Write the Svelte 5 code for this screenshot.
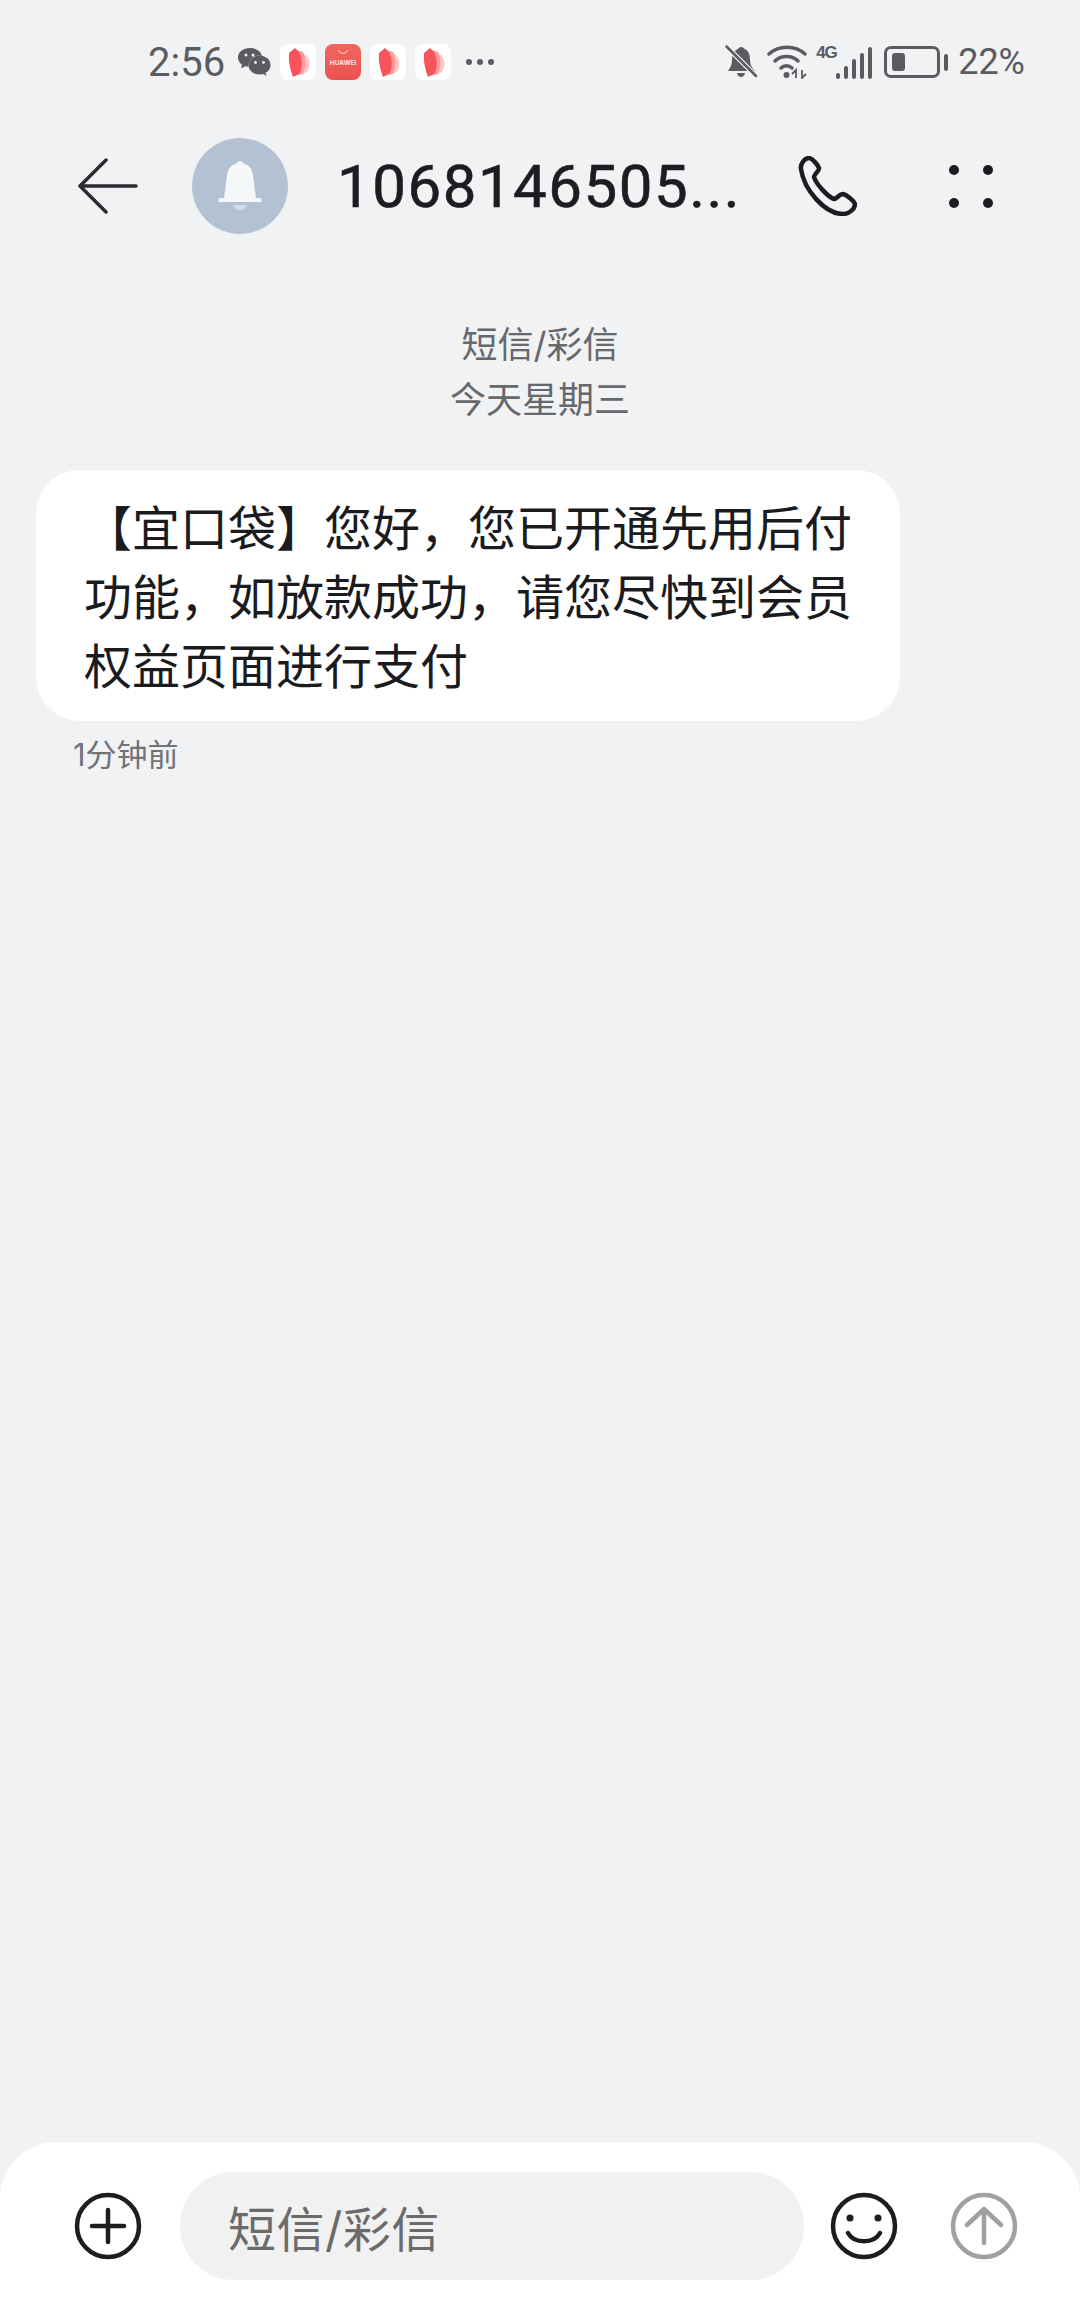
<script>
  const fanIcons = [0, 1, 2];
</script>

{#snippet fan()}
  <span class="app-tile">
    <svg width="36" height="36" viewBox="0 0 36 36">
      <path d="M21 8L27 12Q32 20 27 28L22 30Z" fill="#fbc6c6" />
      <path d="M17 6L23 8Q28 18 23 30L15 32Z" fill="#fb9a9c" />
      <path d="M9 9L15 4L19 8Q24 18 20 29L13 33Q8 20 9 9Z" fill="#f6535a" />
    </svg>
  </span>
{/snippet}

<div class="page">
  <div class="status">
    <div class="status-left">
      <span class="time">2:56</span>
      <svg class="wechat" width="34" height="30" viewBox="0 0 34 30">
        <path d="M13 1C6 1 1 5 1 10.500C1 13.500 2.500 16 5 17.800L4 21.500L8.200 19.300C9.200 19.600 10.500 19.800 11.500 19.800C11 10 20 7 25 9C24 4.500 19 1 13 1Z" fill="#5a5c60" />
        <ellipse cx="22.500" cy="18" rx="11" ry="9.500" fill="#5a5c60" />
        <path d="M28 25L30 29L25 26.500Z" fill="#5a5c60" />
        <circle cx="9" cy="8" r="1.500" fill="#f1f2f4" />
        <circle cx="16" cy="8" r="1.500" fill="#f1f2f4" />
        <circle cx="18.500" cy="15.500" r="1.400" fill="#f1f2f4" />
        <circle cx="26.500" cy="15.500" r="1.400" fill="#f1f2f4" />
      </svg>
      <div class="apps">
        {@render fan()}
        <span class="huawei">
          <svg width="14" height="7" viewBox="0 0 14 7"><path d="M2 1Q7 8 12 1" fill="none" stroke="#fff" stroke-width="1" opacity="0.8" /></svg>
          <span class="huawei-name">HUAWEI</span>
        </span>
        {#each fanIcons.slice(0, 2) as i (i)}
          {@render fan()}
        {/each}
      </div>
      <span class="more"><i></i><i></i><i></i></span>
    </div>
    <div class="status-right">
      <svg width="33" height="34" viewBox="0 0 33 34">
        <path d="M16 2C18 2 19 3 19.500 4C24 6 25 10 25 15C25 20 27 23 30 26H3C5 23 7 20 7 15C7 9 10 5 13 4C13.500 3 14.500 2 16 2Z" fill="#5a5c60" />
        <path d="M12 28H20C19.500 31 17.500 32 16 32C14.500 32 12.500 31 12 28Z" fill="#5a5c60" />
        <path d="M2 2L31 31" stroke="#f1f2f4" stroke-width="5" />
        <path d="M1.500 1.500L31 31" stroke="#5a5c60" stroke-width="2.500" stroke-linecap="round" />
      </svg>
      <svg class="wifi" width="40" height="34" viewBox="0 0 40 34">
        <path d="M2 9C12 0 28 0 38 9" fill="none" stroke="#5a5c60" stroke-width="3.500" stroke-linecap="round" />
        <path d="M8 16C14 10 25 10 31 16" fill="none" stroke="#5a5c60" stroke-width="3.500" stroke-linecap="round" />
        <path d="M14 23C17 20 22 20 25 23" fill="none" stroke="#5a5c60" stroke-width="3.500" stroke-linecap="round" />
        <circle cx="19.500" cy="30" r="3" fill="#5a5c60" />
        <path d="M29 33V25M25 29L29 25V33M35 25V33L39 29" fill="none" stroke="#5a5c60" stroke-width="1.800" />
      </svg>
      <div class="cell">
        <span class="net">4G</span>
        <div class="bars">
          <i style="height: 6px"></i><i style="height: 13px"></i><i style="height: 20px"></i><i style="height: 26px"></i><i style="height: 32px"></i>
        </div>
      </div>
      <div class="battery">
        <div class="battery-body"><div class="battery-fill" style="width: 22%"></div></div>
        <div class="battery-nub"></div>
      </div>
      <span class="percent">22%</span>
    </div>
  </div>

  <header class="header">
    <svg class="back" width="60" height="56" viewBox="0 0 60 56">
      <path d="M58 28H2M28 2L2 28L28 54" fill="none" stroke="#2b2c2f" stroke-width="3.500" stroke-linecap="round" stroke-linejoin="round" />
    </svg>
    <div class="avatar">
      <svg width="48" height="52" viewBox="0 0 48 52">
        <path d="M24 1C26 1 27 2 27.500 3.500C33 5 36 9 37 15L40 38H44C46 38 46.500 42 44 42H4C1.500 42 2 38 4 38H8L11 15C12 9 15 5 20.500 3.500C21 2 22 1 24 1Z" fill="#f5f7f9" />
        <path d="M17 45H31C30 49 27 50 24 50C21 50 18 49 17 45Z" fill="#d3dce5" />
      </svg>
    </div>
    <h1 class="title">1068146505...</h1>
    <svg class="phone" width="60" height="60" viewBox="0 0 60 60">
      <path d="M4 13C3 9 7 2 12 2C15 2 21 9 22 12C22.500 15 17 18 17 21C19 28 31 41 37 43C40 43 42 38 46 38C50 39 57 45 58 48C58 53 52 58 46 58C28 58 7 34 4 13Z" fill="none" stroke="#1c1d20" stroke-width="4.500" stroke-linejoin="round" />
    </svg>
    <div class="dots"><i></i><i></i><i></i><i></i></div>
  </header>

  <main class="thread">
    <div class="date">
      <div>短信/彩信</div>
      <div>今天星期三</div>
    </div>
    <div class="bubble">【宜口袋】您好，您已开通先用后付功能，如放款成功，请您尽快到会员权益页面进行支付</div>
    <div class="sent">1分钟前</div>
  </main>

  <footer class="composer">
    <svg width="68" height="68" viewBox="0 0 68 68">
      <circle cx="34" cy="34" r="31" fill="none" stroke="#1c1d20" stroke-width="4.500" />
      <path d="M18 34H50M34 18V50" stroke="#1c1d20" stroke-width="4.500" stroke-linecap="round" />
    </svg>
    <div class="input">短信/彩信</div>
    <svg class="smile" width="68" height="68" viewBox="0 0 68 68">
      <circle cx="34" cy="34" r="31" fill="none" stroke="#1c1d20" stroke-width="4.500" />
      <circle cx="20" cy="26" r="3.500" fill="#1c1d20" />
      <circle cx="48" cy="26" r="3.500" fill="#1c1d20" />
      <path d="M18 41C24 52 44 52 50 41" fill="none" stroke="#1c1d20" stroke-width="4.500" stroke-linecap="round" />
    </svg>
    <svg width="68" height="68" viewBox="0 0 68 68">
      <circle cx="34" cy="34" r="31" fill="none" stroke="#a0a0a0" stroke-width="4.500" />
      <path d="M34 51V18M17 33L34 17L51 33" fill="none" stroke="#a0a0a0" stroke-width="4.500" stroke-linecap="round" stroke-linejoin="round" />
    </svg>
  </footer>
</div>

<style>
  :global(body) {
    margin: 0;
    background: #f1f2f4;
  }

  .page {
    width: 1080px;
    height: 2310px;
    display: flex;
    flex-direction: column;
    background: #f1f2f4;
    font-family: Inter, "Noto Sans CJK SC", sans-serif;
    overflow: hidden;
  }

  .status {
    display: flex;
    justify-content: space-between;
    align-items: center;
    height: 36px;
    margin-top: 44px;
    padding: 0 55px 0 148px;
    color: #5a5c60;
  }

  .status-left,
  .status-right {
    display: flex;
    align-items: center;
  }

  .time {
    font-size: 40px;
    width: 89px;
    font-family: Roboto, sans-serif;
  }

  .wechat {
    margin-right: 9px;
  }

  .apps {
    display: flex;
    gap: 9px;
  }

  .app-tile {
    display: flex;
    width: 36px;
    height: 36px;
    background: #fff;
    border-radius: 8px;
  }

  .huawei {
    display: flex;
    flex-direction: column;
    align-items: center;
    width: 36px;
    height: 36px;
    padding-top: 5px;
    box-sizing: border-box;
    background: linear-gradient(#f3655f, #e9524f);
    border-radius: 8px;
  }

  .huawei-name {
    margin-top: 3px;
    font-size: 6.500px;
    font-weight: 700;
    line-height: 8px;
    color: #ffe3e0;
  }

  .more {
    display: flex;
    gap: 5px;
    margin-left: 15px;
  }

  .more i {
    width: 6px;
    height: 6px;
    background: #5a5c60;
    border-radius: 50%;
  }

  .wifi {
    margin-left: 9px;
  }

  .cell {
    display: flex;
    align-items: flex-end;
    margin-left: 9px;
    height: 34px;
  }

  .net {
    align-self: flex-start;
    font-family: "Liberation Sans", sans-serif;
    font-size: 17px;
    font-weight: 700;
    line-height: 16px;
    width: 20px;
    letter-spacing: -1px;
  }

  .bars {
    display: flex;
    align-items: flex-end;
    gap: 4px;
  }

  .bars i {
    width: 4px;
    background: #5a5c60;
    border-radius: 2px;
  }

  .battery {
    display: flex;
    align-items: center;
    margin-left: 12px;
  }

  .battery-body {
    width: 56px;
    height: 32px;
    box-sizing: border-box;
    padding: 4px 5px;
    border: 3px solid #5a5c60;
    border-radius: 7px;
  }

  .battery-fill {
    height: 100%;
    min-width: 13px;
    background: #5a5c60;
    border-radius: 3px;
  }

  .battery-nub {
    width: 4px;
    height: 17px;
    margin-left: 4px;
    background: #5a5c60;
    border-radius: 2px;
  }

  .percent {
    margin-left: 10px;
    font-family: Roboto, sans-serif;
    font-size: 36px;
  }

  .header {
    display: flex;
    align-items: center;
    height: 130px;
    margin-top: 41px;
    padding-left: 78px;
  }

  .avatar {
    display: flex;
    align-items: center;
    justify-content: center;
    width: 96px;
    height: 96px;
    margin-left: 54px;
    background: #b3c2d2;
    border-radius: 50%;
  }

  .title {
    width: 460px;
    margin: 0 0 0 49px;
    font-size: 60px;
    font-weight: 400;
    color: #1c1d20;
    white-space: nowrap;
    font-family: Roboto, sans-serif;
    letter-spacing: 1.500px;
    -webkit-text-stroke: 0.6px #1c1d20;
  }

  .dots {
    display: grid;
    grid-template-columns: 10px 10px;
    column-gap: 24px;
    row-gap: 23px;
    margin-left: 92px;
  }

  .dots i {
    width: 10px;
    height: 10px;
    background: #1c1d20;
    border-radius: 50%;
  }

  .thread {
    flex: 1;
    padding-top: 67px;
  }

  .date {
    font-size: 36px;
    line-height: 55px;
    text-align: center;
    color: #66686c;
  }

  .bubble {
    width: 864px;
    box-sizing: border-box;
    margin: 42px 0 0 36px;
    padding: 24px 46px 20px 48px;
    font-size: 48px;
    line-height: 69px;
    color: #1a1b1e;
    background: #fff;
    border-radius: 44px;
  }

  .sent {
    margin: 14px 0 0 73px;
    font-size: 31px;
    line-height: 40px;
    color: #717378;
  }

  .composer {
    display: flex;
    align-items: center;
    height: 168px;
    padding: 0 62px 0 74px;
    box-sizing: border-box;
    background: #fff;
    border-radius: 56px 56px 0 0;
  }

  .input {
    display: flex;
    align-items: center;
    width: 624px;
    height: 108px;
    box-sizing: border-box;
    margin-left: 38px;
    padding-left: 48px;
    font-size: 48px;
    letter-spacing: 0.500px;
    color: #6b6b6b;
    background: #f1f1f2;
    border-radius: 54px;
  }

  .smile {
    margin: 0 52px 0 26px;
  }
</style>
